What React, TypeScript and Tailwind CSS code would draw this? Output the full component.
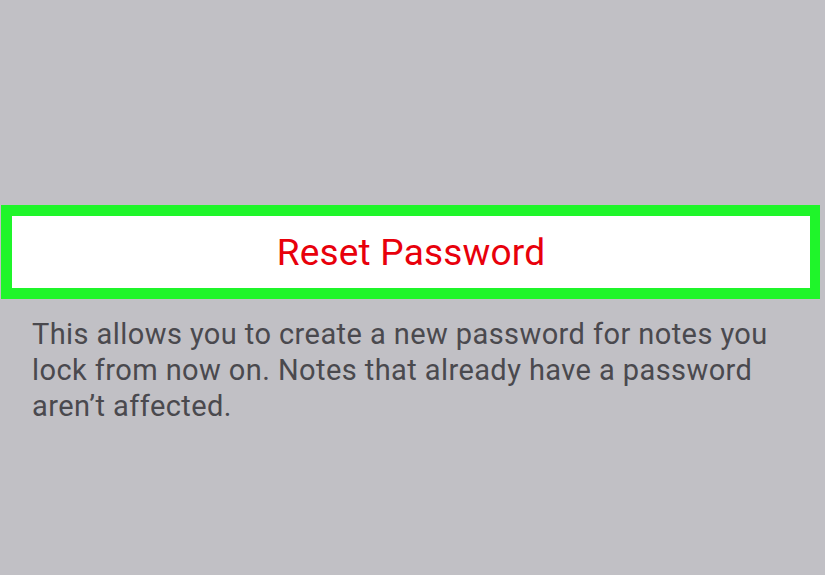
export default function App() {
  return (
    <div className="w-[825px] h-[575px] bg-[#c1c0c5] flex flex-col overflow-hidden">
      <div className="h-[205px]" />
      <div className="mx-[1px] mr-[5px] h-[94px] border-[11px] border-r-[10px] border-[#1ff52a] bg-white flex items-center justify-center">
        <span className="text-[37px] text-[#e8000b] leading-none font-['Roboto',sans-serif] tracking-[0.2px]">Reset Password</span>
      </div>
      <p className="mt-[17px] ml-[32px] w-[780px] text-[29px] leading-[36px] tracking-[0.42px] text-[#4a494e] font-['Roboto',sans-serif]">
        This allows you to create a new password for notes you lock from now on. Notes that already have a password aren’t affected.
      </p>
    </div>
  );
}
